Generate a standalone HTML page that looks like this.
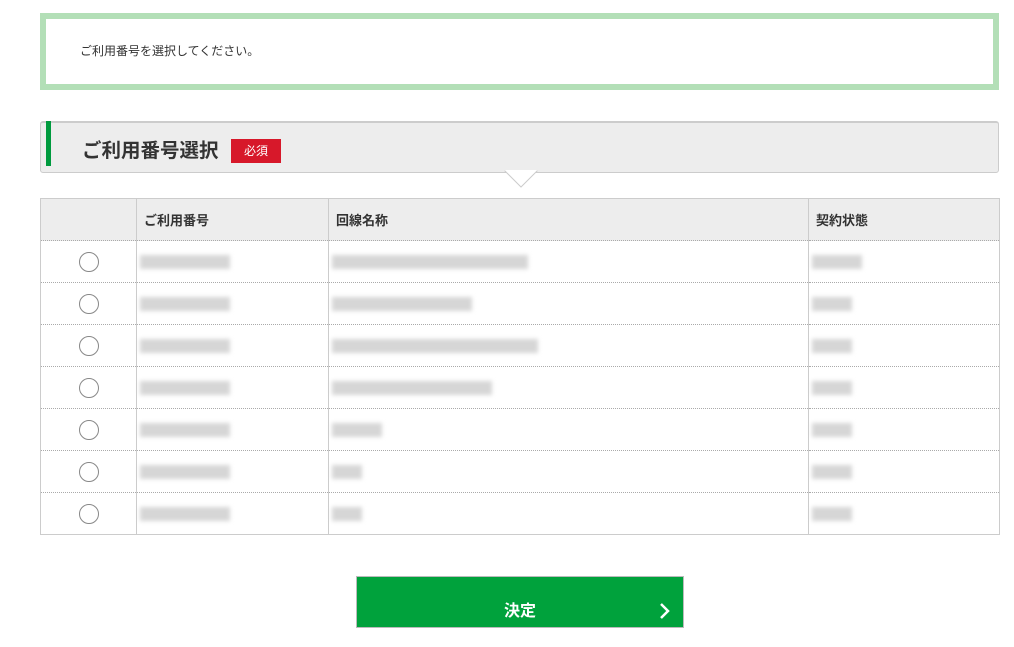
<!DOCTYPE html><html><head><meta charset="utf-8"><style>
body{margin:0;background:#fff;font-family:"Liberation Sans","Noto Sans CJK JP",sans-serif;color:#333;width:1014px;height:621px;overflow:hidden;position:relative}
.a{position:absolute}
.top{left:40px;top:13px;width:947px;height:65px;border:6px solid #b3dfb7;}
.top span{position:absolute;left:34px;top:23px;font-size:12px;color:#333}
.hd{left:40px;top:121px;width:957px;height:49px;background:#ededed;border:1px solid #ccc;border-top:2px solid #ccc;border-radius:3px}
.bar{left:46px;top:121px;width:5px;height:45px;background:#009a3e}
.ttl{left:82px;top:134px;font-size:19.5px;font-weight:bold;color:#333}
.bd{left:231px;top:139px;width:50px;height:24px;background:#d7182a;color:#fff;font-size:12px;text-align:center;line-height:24px}
table{position:absolute;left:40px;top:198px;width:960px;border-collapse:collapse;font-size:13px}
td,th{height:41px;padding:0 0 0 7px;text-align:left;border-left:1px solid #ccc;border-right:1px solid #ccc;border-bottom:1px dotted #aaa}
td{padding-left:3px}
th{background:#ededed;font-weight:bold;border-top:1px solid #ccc;border-bottom:1px dotted #aaa}
tr:last-child td{border-bottom:1px solid #ccc}
.r{width:18px;height:18px;border:1px solid #888;border-radius:50%;margin:auto}
td.c{padding:0}
.b{display:inline-block;height:14px;background:#d6d6d6;filter:blur(2px);vertical-align:middle}
.btn{left:356px;top:576px;width:326px;height:50px;background:#00a23c;border:1px solid #bbb;color:#fff;font-weight:bold;font-size:16px;text-align:center;line-height:70px}
</style></head><body>
<div class="a top"><span>ご利用番号を選択してください。</span></div>
<div class="a hd"></div><div class="a bar"></div>
<div class="a ttl">ご利用番号選択</div><div class="a bd">必須</div>
<svg class="a" style="left:504px;top:170px" width="34" height="18"><polygon points="0,0 17,17 34,0" fill="#fff" stroke="#ccc"/><rect x="0" y="-2" width="34" height="2.5" fill="#fff"/></svg>
<table>
<tr><th style="width:88px"></th><th style="width:184px">ご利用番号</th><th style="width:472px">回線名称</th><th>契約状態</th></tr>
<tr><td class="c"><div class="r"></div></td><td><span class="b" style="width:90px"></span></td><td><span class="b" style="width:196px"></span></td><td><span class="b" style="width:50px"></span></td></tr>
<tr><td class="c"><div class="r"></div></td><td><span class="b" style="width:90px"></span></td><td><span class="b" style="width:140px"></span></td><td><span class="b" style="width:40px"></span></td></tr>
<tr><td class="c"><div class="r"></div></td><td><span class="b" style="width:90px"></span></td><td><span class="b" style="width:206px"></span></td><td><span class="b" style="width:40px"></span></td></tr>
<tr><td class="c"><div class="r"></div></td><td><span class="b" style="width:90px"></span></td><td><span class="b" style="width:160px"></span></td><td><span class="b" style="width:40px"></span></td></tr>
<tr><td class="c"><div class="r"></div></td><td><span class="b" style="width:90px"></span></td><td><span class="b" style="width:50px"></span></td><td><span class="b" style="width:40px"></span></td></tr>
<tr><td class="c"><div class="r"></div></td><td><span class="b" style="width:90px"></span></td><td><span class="b" style="width:30px"></span></td><td><span class="b" style="width:40px"></span></td></tr>
<tr><td class="c"><div class="r"></div></td><td><span class="b" style="width:90px"></span></td><td><span class="b" style="width:30px"></span></td><td><span class="b" style="width:40px"></span></td></tr>
</table>
<div class="a btn">決定</div>
<svg class="a" style="left:658px;top:602px" width="14" height="18"><path d="M3 2 L10 9 L3 16" stroke="#fff" stroke-width="2.5" fill="none"/></svg>
</body></html>
